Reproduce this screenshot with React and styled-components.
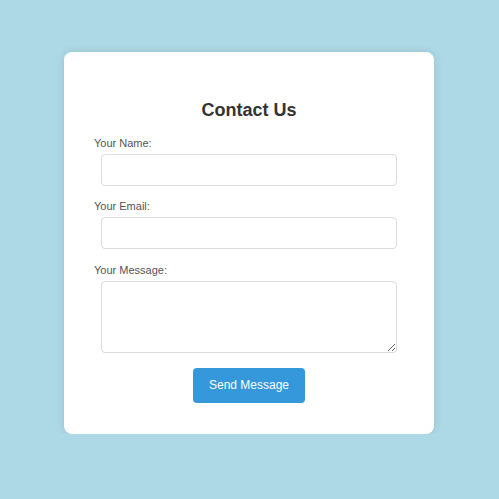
import styled, { createGlobalStyle } from 'styled-components';

const GlobalStyle = createGlobalStyle`
    body {
        margin: 0;
        background: #add8e6;
        font-family: 'Liberation Sans', Arial, sans-serif;
    }
`;

const Page = styled.div`
    padding-top: 52px;
`;

const Card = styled.div`
    box-sizing: border-box;
    width: 370px;
    margin: 0 0 0 64px;
    padding: 30px 30px 31px;
    background: #fff;
    border-radius: 8px;
    box-shadow: 0 0 10px rgba(0, 0, 0, 0.1);
`;

const Title = styled.h2`
    margin: 18px 0 16px;
    font-size: 18px;
    line-height: 21px;
    font-weight: bold;
    color: #333;
    text-align: center;
`;

const Form = styled.form`
    display: flex;
    flex-direction: column;
`;

const Label = styled.label`
    display: block;
    font-size: 11px;
    line-height: 13px;
    color: #555;
    margin-bottom: 4px;
`;

const Input = styled.input`
    display: block;
    box-sizing: border-box;
    width: calc(100% - 14px);
    height: 32px;
    margin: 0 7px ${(p) => p.$space || 14}px;
    padding: 6px 8px;
    border: 1px solid #ddd;
    border-radius: 4px;
    font-family: inherit;
    font-size: 12px;
`;

const TextArea = styled.textarea`
    display: block;
    box-sizing: border-box;
    width: calc(100% - 14px);
    height: 72px;
    margin: 0 7px 15px;
    padding: 6px 8px;
    border: 1px solid #ddd;
    border-radius: 4px;
    font-family: inherit;
    font-size: 12px;
`;

const Button = styled.button`
    align-self: center;
    padding: 10px 16px;
    line-height: 15px;
    border: none;
    border-radius: 4px;
    background: #3498db;
    color: #fff;
    font-family: inherit;
    font-size: 12px;
    cursor: pointer;
`;

const App = () => {
    return (
        <Page>
            <GlobalStyle />
            <Card>
                <Title>Contact Us</Title>
                <Form onSubmit={(e) => e.preventDefault()}>
                    <Label htmlFor="name">Your Name:</Label>
                    <Input id="name" type="text" />
                    <Label htmlFor="email">Your Email:</Label>
                    <Input id="email" type="email" $space={15} />
                    <Label htmlFor="message">Your Message:</Label>
                    <TextArea id="message" />
                    <Button type="submit">Send Message</Button>
                </Form>
            </Card>
        </Page>
    );
};

export default App;
